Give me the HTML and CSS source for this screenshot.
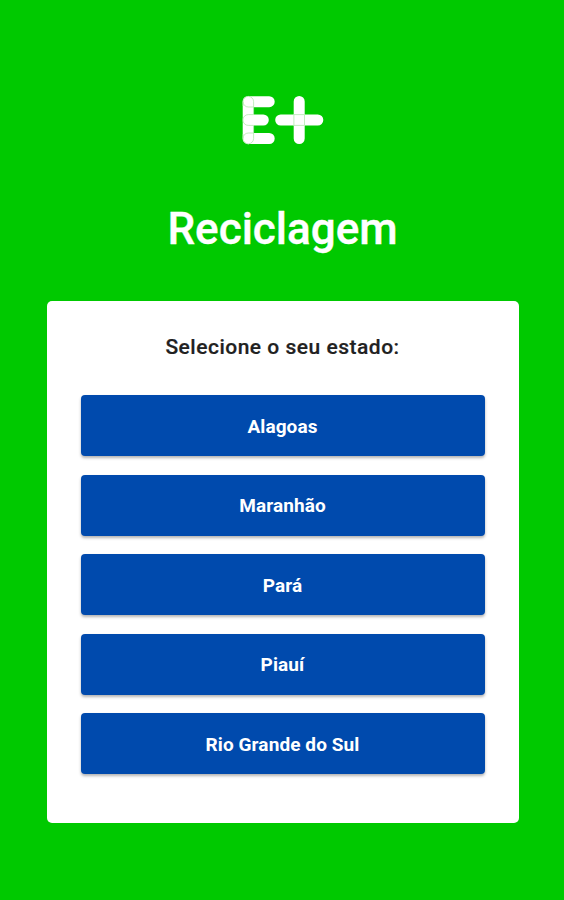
FILE: index.html
```html
<!DOCTYPE html>
<html lang="pt-BR">
<head>
    <meta charset="UTF-8">
    <meta name="viewport" content="width=device-width, initial-scale=1.0">
    <title>E+ Reciclagem</title>
    <link rel="stylesheet" href="styles.css">
</head>
<body>
    <svg class="logo" width="84" height="52" viewBox="241 94 84 52" role="img" aria-label="E+">
        <!-- rounded bars of the letter and the plus sign -->
        <g fill="none" stroke="#fff" stroke-width="11" stroke-linecap="round">
            <path d="M248.2 101.5V138.7M248.2 101.7H269.2M248.2 120H263.3M248.2 138.5H269.2"/>
            <path d="M299.2 101.5V138.5M280.7 120H317.8"/>
        </g>
        <!-- thin seams where the bars overlap -->
        <g fill="none" stroke="#a9e5a5" stroke-width="0.7">
            <path d="M243 106V101.700A5.300 5.300 0 0 1 253.600 101.700V114.500M243 101.700A5.300 5.300 0 0 0 248.300 107H253.600"/>
            <path d="M253.600 114.600H248.300A5.300 5.300 0 0 0 248.300 125.400H253.600"/>
            <path d="M253.600 133H248.300A5.300 5.300 0 0 0 243 138.500M253.600 125.500V138.500A5.300 5.300 0 0 1 243 138.500V134"/>
            <path d="M293.900 114.600H304.500V125.400H293.900Z"/>
        </g>
    </svg>
    <h1>Reciclagem</h1>
    <div class="container">
        <h2>Selecione o seu estado:</h2>
        <div class="states">
            <button type="button">Alagoas</button>
            <button type="button">Maranhão</button>
            <button type="button">Pará</button>
            <button type="button">Piauí</button>
            <button type="button">Rio Grande do Sul</button>
        </div>
    </div>
</body>
</html>
```
FILE: styles.css
```css
body {
    margin: 0;
    padding: 94px 0 0 1px;
    min-height: 900px;
    box-sizing: border-box;
    display: flex;
    flex-direction: column;
    align-items: center;
    background-color: #00c900;
    font-family: Roboto, sans-serif;
}
.logo {
    display: block;
}
h1 {
    margin: 56px 0 45px;
    color: #fff;
    font-size: 44px;
    font-weight: 500;
    line-height: 54px;
    -webkit-text-stroke: 0.4px #fff;
}
.container {
    width: 472px;
    height: 522px;
    padding: 32px 34px 0;
    box-sizing: border-box;
    border-radius: 5px;
    background-color: #fff;
}
h2 {
    margin: 0 0 34px;
    color: #212121;
    font-size: 21px;
    font-weight: 500;
    letter-spacing: 0.5px;
    line-height: 28px;
    text-align: center;
    -webkit-text-stroke: 0.2px #212121;
}
.states {
    display: flex;
    flex-direction: column;
    gap: 18.5px;
}
button {
    height: 61px;
    padding: 1px 0 0;
    border: none;
    border-radius: 4px;
    background-color: #004aad;
    color: #fff;
    box-shadow: 0 2px 3px rgba(0, 0, 0, 0.3);
    font-family: inherit;
    font-size: 19px;
    font-weight: 700;
    letter-spacing: 0.1px;
    cursor: pointer;
}
```
